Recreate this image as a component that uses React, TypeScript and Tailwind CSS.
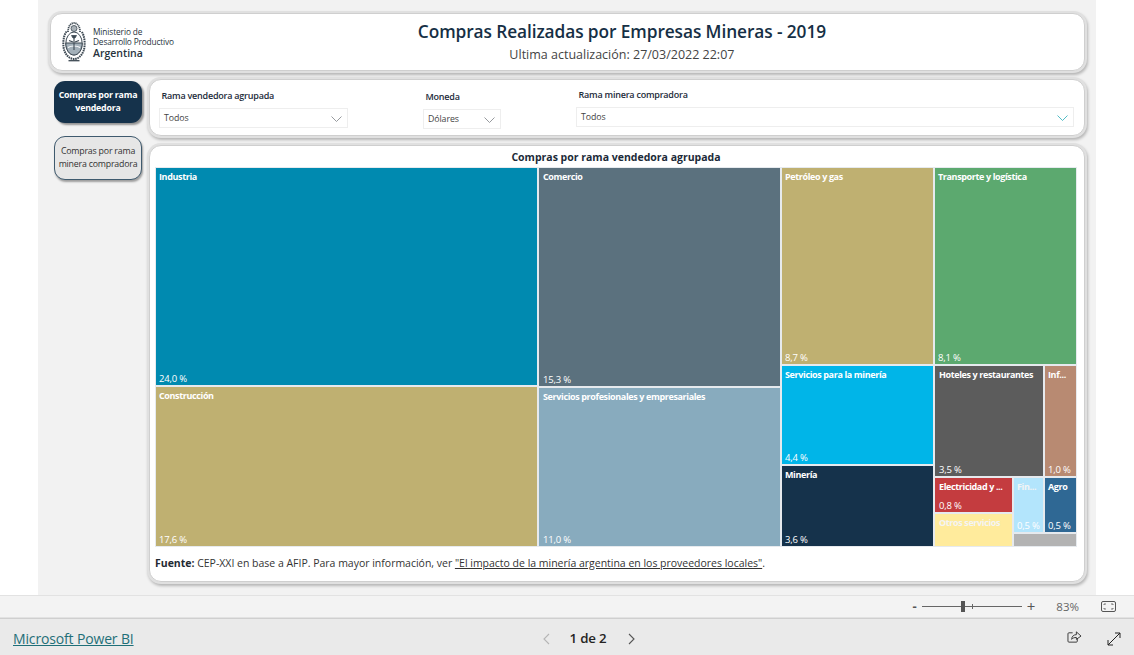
import React from "react";

const font = { fontFamily: '"Open Sans","Noto Sans",sans-serif' };

function Cell({ cls, name, pct, light, inset }: { cls: string; name?: string; pct?: string; light?: boolean; inset?: boolean }) {
  return (
    <div className={`relative overflow-hidden border border-[#e6eaee] text-white ${cls}`}>
      {name && <div className={`absolute top-[2px] whitespace-nowrap text-[9px] font-bold leading-[13px] tracking-[-0.37px] ${inset ? "left-[4px]" : "left-[3px]"} ${light ? "text-[#f4f4f4]" : ""}`}>{name}</div>}
      {pct && <div className={`absolute bottom-0 whitespace-nowrap text-[9.5px] leading-[12px] tracking-[-0.2px] ${inset ? "left-[4px]" : "left-[3px]"}`}>{pct}</div>}
    </div>
  );
}

function Chevron({ color = "#8b8f93" }: { color?: string }) {
  return (
    <svg width="11" height="6" viewBox="0 0 11 6" fill="none" stroke={color} strokeWidth="0.9"><path d="M0.5 0.5 L5.5 5.5 L10.5 0.5" /></svg>
  );
}

function Escudo() {
  return (
    <svg width="24" height="40" viewBox="0 0 24 40" fill="none" stroke="#3d4953" strokeWidth="0.8">
      <path d="M6 10 C6 4 9 1 12 1 C15 1 18 4 18 10" strokeWidth="1.8" strokeDasharray="1.2 0.7" />
      <circle cx="12" cy="6.5" r="3" fill="#aab2b8" />
      <path d="M4.5 9.5 C1 14 0.5 24 2.5 29 C4.5 34 8 37 12 37 C16 37 19.5 34 21.5 29 C23.5 24 23 14 19.5 9.5" strokeWidth="2" strokeDasharray="1.6 0.7" />
      <ellipse cx="12" cy="21.5" rx="8.2" ry="11.5" fill="#fff" strokeWidth="1" />
      <path d="M3.8 21 H20.2 C20.2 28 16.5 33 12 33 C7.5 33 3.8 28 3.8 21 Z" fill="#a3b0b9" strokeWidth="1" />
      <path d="M6 25.5 C9 23.5 15 23.5 18 25.5" stroke="#fff" strokeWidth="1.2" />
      <path d="M12 15 V28" stroke="#3d4953" strokeWidth="1.1" />
      <path d="M7 18.5 L11 20 M17 18.5 L13 20" strokeWidth="1.3" />
      <path d="M9.5 13.5 H14.5 L13 16 H11 Z" fill="#3d4953" />
      <path d="M6.5 38.7 H17.5" strokeWidth="1.3" />
    </svg>
  );
}

const card = "rounded-[12px] bg-white border border-[#cfcfcf] shadow-[0_0_0_2px_#e0e0e0,1px_2px_3px_2px_rgba(0,0,0,0.25)]";

function Filter({ label, value, w, teal }: { label: string; value: string; w: string; teal?: boolean }) {
  return (
    <div className={w}>
      <div className="h-[16px] whitespace-nowrap pl-[2.5px] text-[9px] font-semibold leading-[14px] tracking-[-0.22px] text-[#1c2b3a]">{label}</div>
      <div className="mt-[3px] flex h-[20px] items-center justify-between border border-[#eeeeee] pl-[4px] pr-[5px] pt-[1px] text-[8.8px] tracking-[-0.1px] text-[#444]">
        <span>{value}</span>
        <Chevron color={teal ? "#3fb5bf" : "#8b8f93"} />
      </div>
    </div>
  );
}

export default function App() {
  return (
    <div style={font} className="flex h-[655px] w-[1134px] flex-col overflow-hidden bg-white text-[#252423]">
      <main className="h-[595px] shrink-0 bg-white pl-[38px]">
        <div className="h-full w-[1058px] bg-[#f2f2f2] pl-[12px] pr-[11px] pt-[13px]">
          <header className={`${card} flex h-[58px] items-center pl-[11px]`}>
            <Escudo />
            <div className="ml-[7px] pt-[1px] text-[#27333d]">
              <div className="text-[8.3px] leading-[10px] tracking-[-0.1px]">Ministerio de</div>
              <div className="text-[8.3px] leading-[10px] tracking-[-0.15px]">Desarrollo Productivo</div>
              <div className="text-[10.5px] font-semibold leading-[12px]">Argentina</div>
            </div>
            <div className="ml-[238px] w-[420px] pb-[2px] text-center">
              <h1 className="text-[17.3px] font-semibold leading-[23px] tracking-[-0.09px] text-[#162f45]">Compras Realizadas por Empresas Mineras - 2019</h1>
              <p className="mt-[4px] text-[12.5px] leading-[16px] text-[#444]">Ultima actualización: 27/03/2022 22:07</p>
            </div>
          </header>
          <div className="mt-[8px] flex">
            <nav className="ml-[4px] w-[88px] shrink-0 pt-[2px]">
              <button className="flex h-[42px] w-[88px] items-center justify-center rounded-[11px] bg-[#15324b] text-center text-[8.8px] font-bold leading-[13px] tracking-[-0.2px] text-white shadow-[2px_2px_2px_rgba(0,0,0,0.4)]">Compras por rama<br />vendedora</button>
              <button className="mt-[13px] flex h-[44px] w-[88px] items-center justify-center rounded-[11px] border border-[#3f5a6e] bg-[#e6e6e6] text-center text-[8.8px] leading-[13px] tracking-[-0.2px] text-[#333] shadow-[1px_2px_2px_rgba(0,0,0,0.35)]">Compras por rama<br />minera compradora</button>
            </nav>
            <div className="ml-[7px] w-[936px]">
              <section className={`${card} flex h-[57px] items-start pl-[8px] pt-[9px]`}>
                <div className="ml-[1px]"><Filter label="Rama vendedora agrupada" value="Todos" w="w-[189px]" /></div>
                <div className="ml-[75px] mt-[1px]"><Filter label="Moneda" value="Dólares" w="w-[78px]" /></div>
                <div className="ml-[75px] -mt-[1px]"><Filter label="Rama minera compradora" value="Todos" w="w-[498px]" teal /></div>
              </section>
              <section className={`${card} mt-[9px] h-[437px] pl-[5px] pt-[4px]`}>
                <h2 className="h-[17px] w-[922px] text-center text-[10.5px] font-bold leading-[15px] text-[#1b2a38]">Compras por rama vendedora agrupada</h2>
                <div className="flex h-[380px] w-[922px]">
                  <div className="flex w-[383px] flex-col">
                    <Cell cls="h-[219px] bg-[#008ab0]" name="Industria" pct="24,0 %" />
                    <Cell cls="h-[161px] bg-[#bfb071]" name="Construcción" pct="17,6 %" />
                  </div>
                  <div className="flex w-[243px] flex-col">
                    <Cell cls="h-[220px] bg-[#5b717e]" name="Comercio" pct="15,3 %" inset />
                    <Cell cls="h-[160px] bg-[#88abbe]" name="Servicios profesionales y empresariales" pct="11,0 %" inset />
                  </div>
                  <div className="flex w-[296px] flex-col">
                    <div className="flex h-[198px]">
                      <Cell cls="w-[153px] bg-[#bfb071]" name="Petróleo y gas" pct="8,7 %" />
                      <Cell cls="w-[143px] bg-[#5ca96f]" name="Transporte y logística" pct="8,1 %" />
                    </div>
                    <div className="flex h-[182px]">
                      <div className="flex w-[153px] flex-col">
                        <Cell cls="h-[100px] bg-[#00b5e8]" name="Servicios para la minería" pct="4,4 %" />
                        <Cell cls="h-[82px] bg-[#15324b]" name="Minería" pct="3,6 %" />
                      </div>
                      <div className="flex w-[143px] flex-col">
                        <div className="flex h-[112px]">
                          <Cell cls="w-[110px] bg-[#5c5c5c]" name="Hoteles y restaurantes" pct="3,5 %" inset />
                          <Cell cls="w-[33px] bg-[#b88a72]" name="Inf..." pct="1,0 %" />
                        </div>
                        <div className="flex h-[70px]">
                          <div className="flex w-[79px] flex-col">
                            <Cell cls="h-[36px] bg-[#c43c3f]" name="Electricidad y ..." pct="0,8 %" inset />
                            <Cell cls="h-[34px] bg-[#ffeb9c]" name="Otros servicios" light inset />
                          </div>
                          <div className="flex w-[64px] flex-col">
                            <div className="flex h-[56px]">
                              <Cell cls="w-[31px] bg-[#b3e5fc]" name="Fin..." pct="0,5 %" light />
                              <Cell cls="w-[33px] bg-[#2f6894]" name="Agro" pct="0,5 %" />
                            </div>
                            <Cell cls="h-[14px] bg-[#b3b3b3]" />
                          </div>
                        </div>
                      </div>
                    </div>
                  </div>
                </div>
                <p className="mt-[9px] whitespace-nowrap text-[10.5px] leading-[15px] tracking-[-0.01px] text-[#333]">
                  <b className="text-[#1f2a33]">Fuente:</b> CEP-XXI en base a AFIP. Para mayor información, ver <span className="underline">"El impacto de la minería argentina en los proveedores locales"</span>.
                </p>
              </section>
            </div>
          </div>
        </div>
      </main>
      <div className="flex h-[23px] shrink-0 items-center justify-end border-y border-[#e2e2e2] bg-[#f3f3f3] pr-[18px] text-[#555]">
        <span className="text-[13px] font-bold leading-none">-</span>
        <div className="relative ml-[5px] h-[1px] w-[100px] bg-[#666]">
          <div className="absolute left-[39px] -top-[5px] h-[11px] w-[4px] bg-[#555]" />
          <div className="absolute left-[50px] -top-[2px] h-[5px] w-[1px] bg-[#666]" />
        </div>
        <span className="ml-[5px] text-[15px] leading-none">+</span>
        <span className="ml-[21px] text-[11.5px] text-[#666]">83%</span>
        <svg className="ml-[22px]" width="15" height="11" viewBox="0 0 15 11" fill="none" stroke="#555"><rect x="0.5" y="0.5" width="14" height="10" rx="1.5" /><path d="M3 4V3H5M10 3H12V4M12 7V8H10M5 8H3V7" strokeWidth="0.8" /></svg>
      </div>
      <footer className="relative flex h-[37px] shrink-0 items-center border-t border-[#cfcfcf] bg-[#eaeaea] pl-[13px] pt-[3px]">
        <a className="text-[14px] leading-none tracking-[-0.15px] text-[#1f6f78] underline">Microsoft Power BI</a>
        <div className="ml-[408px] flex items-center">
          <svg width="8" height="12" viewBox="0 0 8 12" fill="none" stroke="#b5b5b5" strokeWidth="1.1"><path d="M7 1 L2 6 L7 11" /></svg>
          <span className="ml-[20px] text-[13.3px] font-semibold tracking-[-0.2px] text-[#252423]">1 de 2</span>
          <svg className="ml-[22px]" width="8" height="12" viewBox="0 0 8 12" fill="none" stroke="#555" strokeWidth="1.1"><path d="M1 1 L6 6 L1 11" /></svg>
        </div>
        <svg className="absolute left-[1067px] top-[11px]" width="15" height="14" viewBox="0 0 16 15" fill="none" stroke="#333" strokeWidth="1"><path d="M6 3H2C1.4 3 1 3.4 1 4V12C1 12.6 1.4 13 2 13H10C10.6 13 11 12.6 11 12V9" /><path d="M5 10C5 6.5 7.5 5 10 5V2L15 6.5L10 10V8C8 8 6 8.5 5 10Z" /></svg>
        <svg className="absolute left-[1107px] top-[13px]" width="14" height="14" viewBox="0 0 14 14" fill="none" stroke="#222" strokeWidth="1"><path d="M8 1H13V6M13 1L1 13M1 8V13H6" /></svg>
      </footer>
    </div>
  );
}
